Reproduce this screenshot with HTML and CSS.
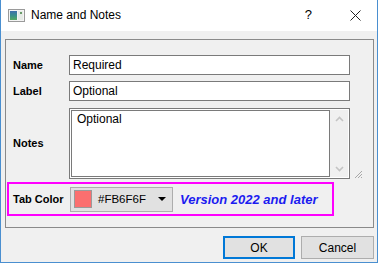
FILE: index.html
```html
<!DOCTYPE html>
<html>
<head>
  <title>Name and Notes</title>
  <link rel="stylesheet" href="styles.css">
</head>
<body>
  <div class="window">
    <div class="titlebar">
      <svg class="app-icon" width="17" height="13" viewBox="0 0 17 13">
        <rect x="0.5" y="0.5" width="16" height="12" fill="#f4f4f4" stroke="#9a9a9a"/>
        <defs>
          <linearGradient id="g" x1="0" y1="0" x2="0" y2="1">
            <stop offset="0" stop-color="#3f6fae"/>
            <stop offset="0.5" stop-color="#3a8e8a"/>
            <stop offset="1" stop-color="#55a860"/>
          </linearGradient>
        </defs>
        <rect x="2" y="2" width="7" height="9" fill="url(#g)"/>
        <rect x="10" y="2" width="5" height="9" fill="#e6ebe6"/>
        <rect x="12" y="3" width="2" height="2" fill="#6a9a6a"/>
      </svg>
      <span class="title">Name and Notes</span>
      <span class="help">?</span>
      <svg class="close" width="11" height="11" viewBox="0 0 11 11">
        <path d="M0.5 0.5 L10.5 10.5 M10.5 0.5 L0.5 10.5" stroke="#222" stroke-width="1"/>
      </svg>
    </div>

    <div class="client">
      <div class="group">
        <div class="fields">
          <label class="field-label">Name</label>
          <div class="text-input">Required</div>

          <label class="field-label">Label</label>
          <div class="text-input">Optional</div>

          <label class="field-label">Notes</label>
          <div class="notes">
            <div class="notes-text">Optional</div>
            <div class="scroll">
              <svg width="9" height="6" viewBox="0 0 9 6"><path d="M1 5 L4.5 1.5 L8 5" fill="none" stroke="#c4c4c4" stroke-width="1.6"/></svg>
              <svg width="9" height="6" viewBox="0 0 9 6"><path d="M1 1 L4.5 4.5 L8 1" fill="none" stroke="#c4c4c4" stroke-width="1.6"/></svg>
            </div>
          </div>
          <svg class="grip" width="9" height="9" viewBox="0 0 9 9">
            <path d="M8 1 L1 8 M8 4 L4 8 M8 7 L7 8" stroke="#a8a8a8" stroke-width="1"/>
          </svg>
        </div>

        <div class="tab-row">
          <span class="field-label tab-label">Tab Color</span>
          <div class="combo">
            <span class="swatch"></span>
            <span class="combo-text">#FB6F6F</span>
            <span class="arrow"></span>
          </div>
          <span class="version">Version 2022 and later</span>
        </div>
      </div>

      <div class="buttons">
        <button class="btn btn-default">OK</button>
        <button class="btn">Cancel</button>
      </div>
    </div>
  </div>
</body>
</html>
```

FILE: styles.css
```css
html, body {
  margin: 0;
  padding: 0;
  background-color: #fff;
}

body {
  width: 379px;
  height: 263px;
  font-family: "Liberation Sans", Arial, sans-serif;
  font-size: 12px;
  color: #000;
}

.window {
  width: 378px;
  height: 263px;
  box-sizing: border-box;
  border-left: 1px solid #4a8fd0;
  border-right: 1px solid #4a8fd0;
  border-bottom: 1px solid #4a8fd0;
  display: flex;
  flex-direction: column;
  background-color: #f0f0f0;
}

.titlebar {
  height: 31px;
  background-color: #fff;
  display: flex;
  align-items: center;
  flex-shrink: 0;
}

.app-icon {
  margin-left: 7px;
  margin-top: -1px;
}

.title {
  margin-left: 6px;
  font-size: 12px;
  margin-top: -1px;
}

.help {
  margin-left: auto;
  font-size: 13px;
  margin-top: -2px;
}

.close {
  margin-left: 38px;
  margin-right: 16px;
  margin-top: -1px;
}

.client {
  flex: 1;
  padding: 8px 3px 0 4px;
}

.group {
  height: 189px;
  box-sizing: border-box;
  border: 1px solid #8a8a8a;
  padding: 15px 0 0 1px;
}

.fields {
  display: grid;
  grid-template-columns: 56px 281px 9px;
  row-gap: 6px;
  padding-left: 6px;
  align-items: center;
}

.field-label {
  grid-column: 1;
  font-weight: bold;
  font-size: 11px;
}

.text-input {
  grid-column: 2;
  height: 20px;
  box-sizing: border-box;
  border: 1px solid #7a7a7a;
  background-color: #fff;
  padding: 2px 0 0 3px;
  line-height: 15px;
}

.notes {
  grid-column: 2;
  height: 71px;
  margin-top: 1px;
  box-sizing: border-box;
  border: 1px solid #7a7a7a;
  background-color: #fff;
  padding: 1px;
  display: flex;
}

.notes-text {
  flex: 1;
  border: 1px solid #7a7a7a;
  padding: 1px 0 0 5px;
  line-height: 15px;
}

.scroll {
  width: 18px;
  background-color: #f0f0f0;
  display: flex;
  flex-direction: column;
  align-items: center;
  justify-content: space-between;
  padding: 6px 0 5px 0;
  box-sizing: border-box;
}

.scroll svg {
  display: block;
}

.grip {
  grid-column: 3;
  grid-row: 3;
  align-self: end;
  margin-left: 4px;
}

.tab-row {
  margin-top: 3px;
  width: 327px;
  height: 34px;
  box-sizing: border-box;
  border: 2px solid #ff00ff;
  display: flex;
  align-items: center;
  padding-left: 4px;
}

.tab-label {
  width: 57px;
}

.combo {
  width: 103px;
  height: 25px;
  box-sizing: border-box;
  border: 1px solid #adadad;
  background-color: #e1e1e1;
  display: flex;
  align-items: center;
  padding-left: 3px;
}

.swatch {
  width: 18px;
  height: 18px;
  box-sizing: border-box;
  border: 1px solid #9a9a9a;
  background-color: #fb6f6f;
}

.combo-text {
  margin-left: 6px;
  font-size: 11.5px;
}

.arrow {
  margin-left: auto;
  margin-right: 6px;
  width: 0;
  height: 0;
  border-left: 4px solid transparent;
  border-right: 4px solid transparent;
  border-top: 4px solid #000;
}

.version {
  margin-left: 7px;
  font-weight: bold;
  font-style: italic;
  font-size: 13px;
  color: #1c1cf0;
}

.buttons {
  display: flex;
  justify-content: flex-end;
  gap: 6px;
  margin-top: 8px;
}

.btn {
  height: 23px;
  width: 73px;
  box-sizing: border-box;
  border: 1px solid #adadad;
  background-color: #e1e1e1;
  font-family: "Liberation Sans", Arial, sans-serif;
  font-size: 12px;
  padding: 0;
  color: #000;
}

.btn-default {
  width: 72px;
  border: 2px solid #0078d7;
}
```
